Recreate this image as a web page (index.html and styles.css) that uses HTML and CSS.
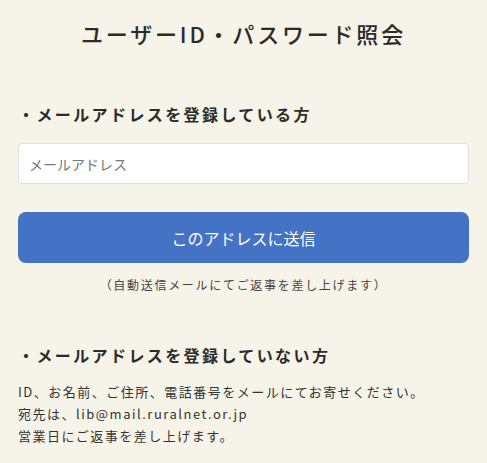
FILE: index.html
```html
<!DOCTYPE html>
<html lang="ja">
<head>
  <meta charset="UTF-8">
  <title>ユーザーID・パスワード照会</title>
  <link rel="stylesheet" href="styles.css">
</head>
<body>
  <div class="container">
    <h1 class="title">ユーザーID・パスワード照会</h1>

    <div class="section">
      <h2 class="section-title">・メールアドレスを登録している方</h2>
      <input class="mail-input" type="text" placeholder="メールアドレス">
      <button class="send-button" type="button">このアドレスに送信</button>
      <p class="note">（自動送信メールにてご返事を差し上げます）</p>
    </div>

    <div class="section section-other">
      <h2 class="section-title">・メールアドレスを登録していない方</h2>
      <p class="info">
        ID、お名前、ご住所、電話番号をメールにてお寄せください。<br>
        宛先は、lib@mail.ruralnet.or.jp<br>
        営業日にご返事を差し上げます。
      </p>
    </div>
  </div>
</body>
</html>
```

FILE: styles.css
```css
body {
  margin: 0;
  background: #f6f3e8;
  color: #333;
  font-family: "Noto Sans CJK JP", "Noto Sans", sans-serif;
}
.container {
  padding: 16px 18px 0;
}
.title {
  margin: 0;
  font-size: 22px;
  line-height: 34px;
  font-weight: 500;
  letter-spacing: 2.8px;
  text-align: center;
  color: #2b2b2b;
}
.section {
  margin-top: 52px;
  display: flex;
  flex-direction: column;
}
.section-title {
  margin: 0;
  font-size: 16px;
  line-height: 24px;
  font-weight: 700;
  letter-spacing: 2.4px;
  color: #2b2b2b;
}
.mail-input {
  margin-top: 17px;
  height: 41px;
  box-sizing: border-box;
  border: 1px solid #e2e0da;
  border-radius: 4px;
  background: #fff;
  padding: 0 10px;
  font-family: inherit;
  font-size: 14px;
  color: #333;
}
.mail-input::placeholder {
  color: #777;
}
.send-button {
  margin-top: 28px;
  height: 51px;
  border: none;
  border-radius: 8px;
  background: #4472c4;
  color: #fff;
  font-family: inherit;
  font-size: 16px;
}
.note {
  margin: 12px 0 0;
  font-size: 12px;
  line-height: 20px;
  letter-spacing: 1.7px;
  text-align: center;
  color: #444;
}
.section-other {
  margin-top: 48px;
}
.info {
  margin: 14px 0 0;
  font-size: 13px;
  line-height: 22px;
  letter-spacing: 1.5px;
  color: #333;
}
```
